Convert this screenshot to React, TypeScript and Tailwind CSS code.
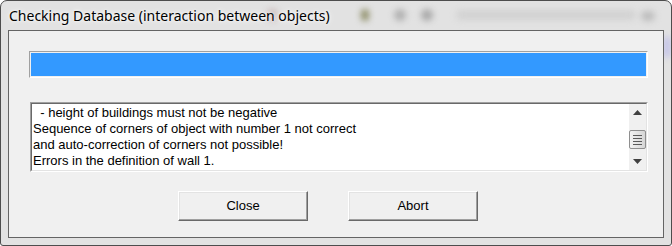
import { type FC } from 'react';

const lines = [
  '  - height of buildings must not be negative',
  'Sequence of corners of object with number 1 not correct',
  'and auto-correction of corners not possible!',
  'Errors in the definition of wall 1.',
];

const ClassicButton: FC<{ label: string }> = ({ label }) => (
  <button
    type="button"
    className="h-[30px] w-[130px] border border-t-white border-l-white border-r-[#696969] border-b-[#696969] bg-[#f0f0f0] text-[13px] text-black shadow-[inset_-1px_-1px_0_#a0a0a0,inset_1px_1px_0_#e3e3e3]"
  >
    {label}
  </button>
);

const ScrollBar: FC = () => (
  <div className="flex w-[17px] flex-col items-center bg-[#f0f0f0]">
    <div className="flex h-[17px] w-full items-center justify-center">
      <svg width="9" height="5" viewBox="0 0 9 5">
        <path d="M4.5 0 L9 5 L0 5 Z" fill="#404040" />
      </svg>
    </div>
    <div className="mt-[9px] flex h-[19px] w-[17px] flex-col items-center justify-center gap-[2px] rounded-[2px] border border-[#8f8f8f] bg-gradient-to-r from-[#f2f2f2] to-[#d6d6d6]">
      <div className="h-px w-[9px] bg-[#5a5a5a]" />
      <div className="h-px w-[9px] bg-[#5a5a5a]" />
      <div className="h-px w-[9px] bg-[#5a5a5a]" />
      <div className="h-px w-[9px] bg-[#5a5a5a]" />
    </div>
    <div className="mt-auto flex h-[17px] w-full items-center justify-center">
      <svg width="9" height="5" viewBox="0 0 9 5">
        <path d="M0 0 L9 0 L4.5 5 Z" fill="#404040" />
      </svg>
    </div>
  </div>
);

export default function App() {
  return (
    <div
      className="relative h-[246px] w-[672px] overflow-hidden rounded-t-[7px] rounded-b-[3px] border border-[#4d4d4d] bg-[#e2e2e2]"
      style={{ fontFamily: '"Liberation Sans", Arial, sans-serif' }}
    >
      {/* blurred glass behind the title */}
      <div className="pointer-events-none absolute inset-x-0 top-0 h-[30px] overflow-hidden blur-[3px]">
        <div className="absolute left-[265px] top-[8px] h-[12px] w-[12px] rounded-full bg-[#c9b9b9]" />
        <div className="absolute left-[360px] top-[8px] h-[12px] w-[8px] rounded-full bg-[#8f8f6a]" />
        <div className="absolute left-[393px] top-[8px] h-[12px] w-[12px] rounded-full bg-[#b0b0b0]" />
        <div className="absolute left-[420px] top-[8px] h-[12px] w-[12px] rounded-full bg-[#a8a8a8]" />
        <div className="absolute left-[455px] top-[9px] h-[10px] w-[180px] rounded-full bg-[#d2d2d2]" />
        <div className="absolute left-[640px] top-[10px] h-[10px] w-[14px] rounded-full bg-[#bdbdbd]" />
      </div>
      <div className="absolute right-0 top-[36px] h-[20px] w-[8px] bg-[#c4c4e8] blur-[3px]" />

      <div className="relative flex h-full flex-col px-[7px] pb-[7px]">
        <div className="flex h-[29px] items-center pl-[1px]">
          <span
            className="text-[14px] text-black [text-shadow:0_0_6px_#ffffff,0_0_3px_#ffffff]"
            style={{ fontFamily: '"Noto Sans", "Open Sans", sans-serif' }}
          >
            Checking Database (interaction between objects)
          </span>
        </div>

        <div className="flex flex-1 flex-col border border-[#646464] bg-[#f0f0f0] pl-[20px] pr-[15px] pt-[20px]">
          <div className="h-[27px] border border-t-[#a0a0a0] border-l-[#a0a0a0] border-r-white border-b-white p-px">
            <div className="h-full w-full bg-[#3399ff]" />
          </div>

          <div className="ml-px mt-[24px] flex h-[70px] border border-t-[#a0a0a0] border-l-[#a0a0a0] border-r-white border-b-white">
            <div className="flex flex-1 border border-t-[#696969] border-l-[#696969] border-r-[#e3e3e3] border-b-[#e3e3e3] bg-white">
              <div className="flex-1 pl-[1px] pt-px text-[13px] leading-[16px] text-black">
                {lines.map((line) => (
                  <div key={line} className="whitespace-pre">
                    {line}
                  </div>
                ))}
              </div>
              <ScrollBar />
            </div>
          </div>

          <div className="mt-[19px] flex gap-[40px] pl-[149px]">
            <ClassicButton label="Close" />
            <ClassicButton label="Abort" />
          </div>
        </div>
      </div>
    </div>
  );
}
